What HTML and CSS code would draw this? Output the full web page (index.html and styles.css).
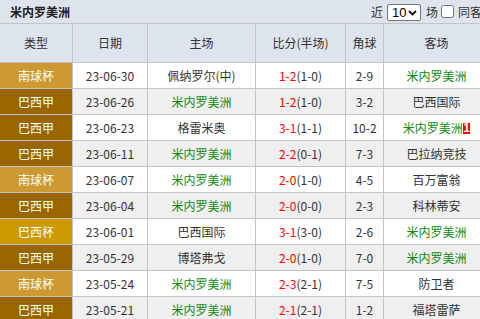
FILE: index.html
```html
<!DOCTYPE html>
<html lang="zh">
<head>
<meta charset="utf-8">
<title>米内罗美洲</title>
<link rel="stylesheet" href="styles.css">
</head>
<body>
<div class="wrap">
  <div class="bar">
    <div class="title">米内罗美洲</div>
    <div class="ctrl">
      <span class="lbl">近</span>
      <span class="selbox">
        <select class="sel"><option>10</option><option>20</option></select>
        <svg class="chev" width="9" height="6" viewBox="0 0 9 6"><path d="M1 1 L4.5 4.5 L8 1" fill="none" stroke="#111" stroke-width="1.8"/></svg>
      </span>
      <span class="lbl">场</span>
      <input type="checkbox" class="chk">
      <span class="lbl">同客场</span>
    </div>
  </div>
  <table class="tbl">
    <colgroup>
      <col class="c1"><col class="c2"><col class="c3"><col class="c4"><col class="c5"><col class="c6">
    </colgroup>
    <thead>
      <tr><th>类型</th><th>日期</th><th>主场</th><th>比分(半场)</th><th>角球</th><th>客场</th></tr>
    </thead>
    <tbody>
      <tr class="odd"><td class="lg nq">南球杯</td><td>23-06-30</td><td>佩纳罗尔(中)</td><td><span class="sc">1-2</span>(1-0)</td><td>2-9</td><td class="gr">米内罗美洲</td></tr>
      <tr class="even"><td class="lg bj">巴西甲</td><td>23-06-26</td><td class="gr">米内罗美洲</td><td><span class="sc">1-2</span>(1-0)</td><td>3-2</td><td>巴西国际</td></tr>
      <tr class="odd"><td class="lg bj">巴西甲</td><td>23-06-23</td><td>格雷米奥</td><td><span class="sc">3-1</span>(1-1)</td><td>10-2</td><td><span class="gr">米内罗美洲</span><span class="badge">1</span></td></tr>
      <tr class="even"><td class="lg bj">巴西甲</td><td>23-06-11</td><td class="gr">米内罗美洲</td><td><span class="sc">2-2</span>(0-1)</td><td>7-3</td><td>巴拉纳竞技</td></tr>
      <tr class="odd"><td class="lg nq">南球杯</td><td>23-06-07</td><td class="gr">米内罗美洲</td><td><span class="sc">2-0</span>(1-0)</td><td>4-5</td><td>百万富翁</td></tr>
      <tr class="even"><td class="lg bj">巴西甲</td><td>23-06-04</td><td class="gr">米内罗美洲</td><td><span class="sc">2-0</span>(0-0)</td><td>2-3</td><td>科林蒂安</td></tr>
      <tr class="odd"><td class="lg bb">巴西杯</td><td>23-06-01</td><td>巴西国际</td><td><span class="sc">3-1</span>(3-0)</td><td>2-6</td><td class="gr">米内罗美洲</td></tr>
      <tr class="even"><td class="lg bj">巴西甲</td><td>23-05-29</td><td>博塔弗戈</td><td><span class="sc">2-0</span>(1-0)</td><td>7-0</td><td class="gr">米内罗美洲</td></tr>
      <tr class="odd"><td class="lg nq">南球杯</td><td>23-05-24</td><td class="gr">米内罗美洲</td><td><span class="sc">2-3</span>(2-1)</td><td>7-5</td><td>防卫者</td></tr>
      <tr class="even"><td class="lg bj">巴西甲</td><td>23-05-21</td><td class="gr">米内罗美洲</td><td><span class="sc">2-1</span>(2-1)</td><td>1-2</td><td>福塔雷萨</td></tr>
    </tbody>
  </table>
</div>
</body>
</html>
```
FILE: styles.css
```css
html, body {
  margin: 0;
  padding: 0;
  overflow: hidden;
  background: #fff;
}
body {
  font-family: "Noto Sans CJK SC", sans-serif;
  font-size: 12px;
  color: #333;
}
.wrap {
  width: 500px;
}
.bar {
  display: flex;
  align-items: center;
  justify-content: space-between;
  height: 24px;
  box-sizing: border-box;
  background: #dde4ed;
  border-bottom: 1px solid #c4c4c4;
  padding: 0 6px 0 10px;
}
.title {
  font-weight: bold;
  color: #222;
  line-height: 23px;
}
.ctrl {
  display: flex;
  align-items: center;
}
.lbl {
  color: #333;
  line-height: 23px;
}
.selbox {
  position: relative;
  display: inline-block;
  margin: 1px 5px 0 4px;
  height: 17px;
}
.sel {
  -webkit-appearance: none;
  appearance: none;
  display: block;
  width: 34px;
  height: 17px;
  box-sizing: border-box;
  margin: 0;
  padding: 0 0 0 4px;
  border: 1px solid #767676;
  border-radius: 2px;
  background: #fff;
  color: #000;
  font-family: "Liberation Sans", sans-serif;
  font-size: 13px;
  line-height: 15px;
}
.chev {
  position: absolute;
  right: 4px;
  top: 6px;
  pointer-events: none;
}
.chk {
  width: 13px;
  height: 13px;
  margin: 0 4px 0 3px;
}
.tbl {
  width: 490px;
  table-layout: fixed;
  border-collapse: separate;
  border-spacing: 0;
}
.c1 { width: 73px; }
.c2 { width: 75px; }
.c3 { width: 108px; }
.c4 { width: 90px; }
.c5 { width: 38px; }
.c6 { width: 106px; }
.tbl th, .tbl td {
  padding: 0;
  text-align: center;
  white-space: nowrap;
  border-right: 1px solid #c4c4c4;
  border-bottom: 1px solid #c4c4c4;
}
.tbl th {
  background: #dde4ed;
  font-weight: normal;
  line-height: 38px;
  color: #333;
}
.tbl td {
  line-height: 25px;
}
.odd td { background: #fff; }
.even td { background: #efefef; }
.tbl td.lg { color: #fff; }
.tbl td.nq { background: #cc9933; }
.tbl td.bj { background: #996600; }
.tbl td.bb { background: #cc9900; }
.gr { color: #118811; }
.sc { color: #f00; }
.badge {
  display: inline-block;
  background: #f00;
  color: #fff;
  font: bold 12px/11px "Liberation Sans", sans-serif;
  padding: 0 0.5px;
  vertical-align: 1px;
}
```
